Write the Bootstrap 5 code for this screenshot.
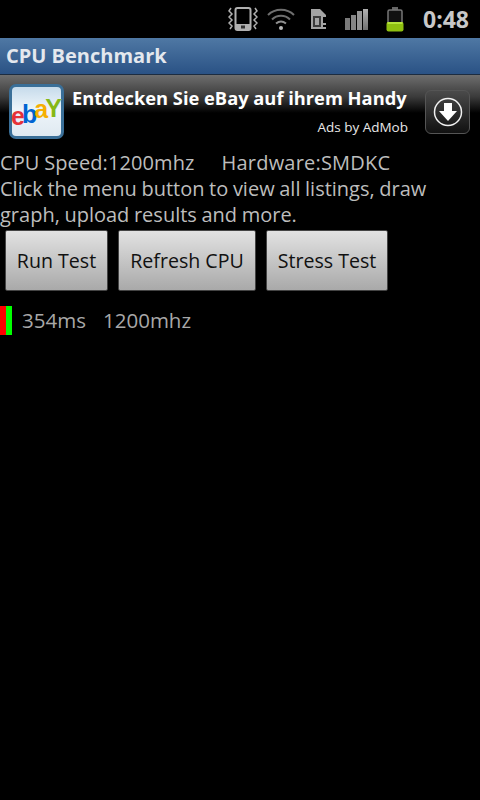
<!DOCTYPE html>
<html lang="de">
<head>
    <meta charset="UTF-8">
    <meta name="viewport" content="width=device-width, initial-scale=1.0">
    <title>CPU Benchmark</title>
    <link href="https://cdn.jsdelivr.net/npm/bootstrap@5.3.0/dist/css/bootstrap.min.css" rel="stylesheet">
    <style>
        body {
            background-color: #000;
            color: #bdbdbd;
            font-family: "Open Sans", "Noto Sans", sans-serif;
            height: 800px;
            overflow: hidden;
        }
        .status-strip {
            height: 38px;
            padding-right: 11px;
        }
        .status-strip svg {
            flex-shrink: 0;
        }
        .gap-vibrate { margin-right: 9px; }
        .gap-wifi { margin-right: 16px; }
        .gap-sim { margin-right: 19px; }
        .gap-signal { margin-right: 17px; }
        .gap-battery { margin-right: 19px; }
        .status-clock {
            color: #c8c8c8;
            font-size: 23px;
            font-weight: 700;
            line-height: 1;
            width: 46px;
            text-align: right;
        }
        .title-strip {
            height: 37px;
            padding-left: 6px;
            background: linear-gradient(#4f78a4, #2a5285);
            border-bottom: 1px solid #1c2c40;
            color: #e4e8ee;
            font-size: 20px;
            font-weight: 700;
            line-height: 35px;
        }
        .ad-strip {
            height: 75px;
            padding: 9px 10px 0 9px;
            background: linear-gradient(#6e6e6e 0, #3a3a3a 22px, #000 38px);
        }
        .ad-logo {
            width: 55px;
            height: 55px;
            border: 3px solid #3a6f98;
            border-radius: 7px;
            background: linear-gradient(#c6dbeb, #eef5fa 45%, #dfe9f1);
            font-family: "Liberation Sans", sans-serif;
            font-size: 25px;
            font-weight: 700;
            letter-spacing: -3px;
            line-height: 1;
            padding-right: 3px;
        }
        .logo-e { color: #e53238; transform: translateY(5px); }
        .logo-b { color: #0064d2; transform: translateY(3px); }
        .logo-a { color: #f5af02; transform: translateY(-2px); }
        .logo-y { color: #86b817; transform: translateY(-3px); }
        .ad-text {
            margin-left: 8px;
            width: 336px;
        }
        .ad-title {
            color: #fff;
            font-size: 18.3px;
            font-weight: 700;
            line-height: 22px;
            margin-top: 3px;
            white-space: nowrap;
        }
        .ad-sub {
            color: #e8e8e8;
            font-size: 13.5px;
            line-height: 18px;
            margin-top: 9px;
        }
        .ad-download {
            width: 45px;
            height: 44px;
            margin-top: 6px;
            margin-left: 17px;
            border: 1px solid #555;
            border-radius: 6px;
            background: linear-gradient(#4a4a4a, #111);
        }
        .info-block {
            font-size: 20px;
            line-height: 26px;
            white-space: nowrap;
            word-spacing: -0.6px;
        }
        .info-speed {
            letter-spacing: 0.1px;
        }
        .info-hw {
            margin-left: 27px;
            letter-spacing: 0.2px;
        }
        .btn-strip {
            gap: 10px;
            padding-left: 5px;
            margin-top: 2px;
        }
        .test-btn {
            height: 61px;
            padding: 0;
            font-size: 19.6px;
            color: #111;
            background: linear-gradient(#e2e2e2, #a9a9a9);
            border: 1px solid #444;
            border-radius: 2px;
        }
        .btn-run { width: 103px; }
        .btn-refresh { width: 138px; }
        .btn-stress { width: 122px; }
        .result-row {
            margin-top: 15px;
        }
        .bar-red, .bar-green {
            width: 6px;
            height: 29px;
        }
        .bar-red { background-color: #f00; }
        .bar-green { background-color: #0f0; }
        .result-text {
            font-size: 20.5px;
            line-height: 29px;
            color: #a8a8a8;
        }
        .result-ms { margin-left: 10px; width: 81px; }
    </style>
</head>
<body>
    <div class="status-strip d-flex align-items-center justify-content-end">
        <svg class="gap-vibrate" width="30" height="24" viewBox="0 0 30 24" fill="none" stroke="#b0b0b0" stroke-width="1.500">
            <rect x="7.500" y="1" width="15" height="22" rx="2" stroke-width="2"/>
            <rect x="7" y="17" width="16" height="6" fill="#b0b0b0" stroke="none"/>
            <rect x="13" y="18.500" width="4" height="3" fill="#333" stroke="none"/>
            <path d="M3 1l-2 3 3 3-3 3 3 3-3 3 3 3-2 3M27 1l2 3-3 3 3 3-3 3 3 3-3 3 2 3"/>
        </svg>
        <svg class="gap-wifi" width="28" height="22" viewBox="0 0 28 22" fill="none" stroke="#6f6f6f" stroke-width="2">
            <path d="M1 7c7-7 19-7 26 0M5 11.500c5-5 13-5 18 0"/>
            <path d="M9 15.500c3-2.500 7-2.500 10 0" stroke="#8f8f8f"/>
            <circle cx="14" cy="20" r="2" fill="#bbb" stroke="none"/>
        </svg>
        <svg class="gap-sim" width="15" height="20" viewBox="0 0 15 20">
            <path d="M0 0h9l6 6v14H0z" fill="#a4a4a4"/>
            <rect x="2" y="7" width="8" height="11" fill="#3c3c3c"/>
            <rect x="4" y="9" width="4" height="7" fill="#a4a4a4"/>
            <rect x="12" y="8" width="3" height="6" fill="#000"/>
            <rect x="12" y="16" width="3" height="2" fill="#000"/>
        </svg>
        <svg class="gap-signal" width="24" height="21" viewBox="0 0 24 21">
            <defs>
                <linearGradient id="signalFill" x1="0" y1="0" x2="0" y2="1">
                    <stop offset="0" stop-color="#b0b0b0"/>
                    <stop offset="1" stop-color="#707070"/>
                </linearGradient>
            </defs>
            <rect x="0" y="9" width="5" height="12" fill="#7a7a7a"/>
            <rect x="6" y="6" width="5" height="15" fill="#858585"/>
            <rect x="12" y="2" width="5" height="19" fill="#959595"/>
            <rect x="18" y="0" width="5" height="21" fill="url(#signalFill)"/>
        </svg>
        <svg class="gap-battery" width="18" height="25" viewBox="0 0 18 25">
            <rect x="6" y="0" width="6" height="3" fill="#666"/>
            <rect x="2" y="3" width="14" height="20" rx="1.500" fill="#111" stroke="#777" stroke-width="1.500"/>
            <rect x="0.500" y="15" width="17" height="9.500" rx="2" fill="#8fbf10"/>
            <rect x="1.500" y="15" width="15" height="2" fill="#b4e23a"/>
        </svg>
        <span class="status-clock">0:48</span>
    </div>

    <div class="title-strip">CPU Benchmark</div>

    <div class="ad-strip d-flex">
        <div class="ad-logo d-flex align-items-center justify-content-center flex-shrink-0">
            <span class="logo-e">e</span><span class="logo-b">b</span><span class="logo-a">a</span><span class="logo-y">Y</span>
        </div>
        <div class="ad-text text-end flex-shrink-0">
            <div class="ad-title text-start">Entdecken Sie eBay auf ihrem Handy</div>
            <div class="ad-sub">Ads by AdMob</div>
        </div>
        <div class="ad-download d-flex align-items-center justify-content-center flex-shrink-0">
            <svg width="30" height="30" viewBox="0 0 30 30">
                <circle cx="15" cy="15" r="13.500" fill="none" stroke="#f0f0f0" stroke-width="1.500"/>
                <path d="M11 6h8v8h5L15 24 6 14h5z" fill="#fff"/>
            </svg>
        </div>
    </div>

    <div class="info-block">
        <div class="d-flex">
            <span class="info-speed">CPU Speed:1200mhz</span>
            <span class="info-hw">Hardware:SMDKC</span>
        </div>
        <div>Click the menu button to view all listings, draw<br>graph, upload results and more.</div>
    </div>

    <div class="d-flex btn-strip">
        <button class="btn test-btn btn-run" type="button">Run Test</button>
        <button class="btn test-btn btn-refresh" type="button">Refresh CPU</button>
        <button class="btn test-btn btn-stress" type="button">Stress Test</button>
    </div>

    <div class="d-flex result-row">
        <span class="bar-red"></span>
        <span class="bar-green"></span>
        <span class="result-text result-ms">354ms</span>
        <span class="result-text">1200mhz</span>
    </div>

    <script src="https://cdn.jsdelivr.net/npm/bootstrap@5.3.0/dist/js/bootstrap.bundle.min.js"></script>
</body>
</html>
